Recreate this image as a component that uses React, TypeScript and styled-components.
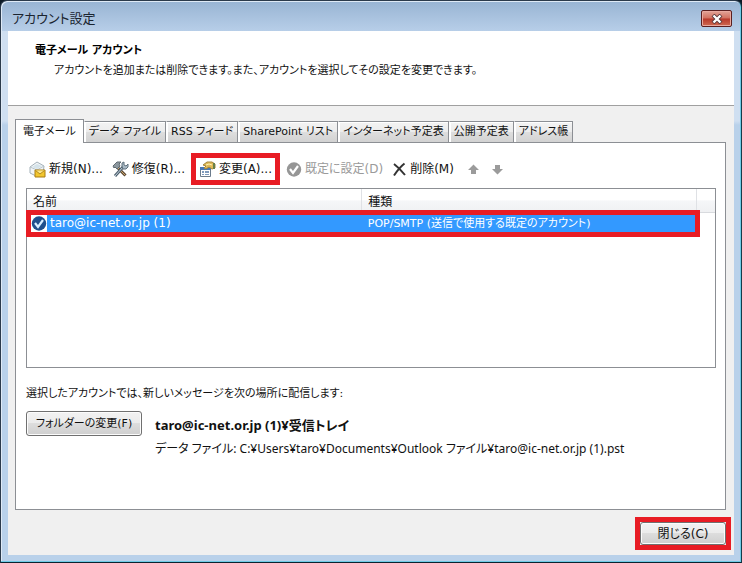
import React from "react";
import styled, { createGlobalStyle, css } from "styled-components";

const GlobalStyle = createGlobalStyle`
  * { box-sizing: border-box; }
  html, body { margin: 0; }
  body {
    background: #0c1a26;
    font-family: "DejaVu Sans", "Noto Sans CJK JP", sans-serif;
    font-size: 11px;
    line-height: 16px;
    font-feature-settings: "palt";
    color: #111;
  }
  button, table { font: inherit; font-feature-settings: inherit; color: inherit; }
  h1, h2, p { margin: 0; font-size: inherit; }
`;

const red = "#e81c24";

const Window = styled.main`
  display: flex;
  flex-direction: column;
  min-height: 100vh;
  padding: 0 7px 7px;
  border: 1px solid #2b3a4b;
  border-right-color: #123c4a;
  border-bottom-color: #0a2430;
  border-radius: 7px 7px 0 0;
  box-shadow: inset -1px -1px #6fcbe6, inset 1px 1px #dfeaf6;
  background:
    linear-gradient(#98b4d3, #b7cee8 30px, transparent 30px),
    linear-gradient(#cfdff1 120px, #b9d1ea 124px);
`;

const TitleBar = styled.header`
  display: flex;
  align-items: center;
  justify-content: space-between;
  height: 30px;
  padding: 5px 2px 0 4px;
`;

const Title = styled.h1`
  font-size: 13px;
  font-weight: 400;
  color: #1a2430;
`;

const CloseBox = styled.button`
  display: grid;
  place-items: center;
  width: 31px;
  height: 17px;
  padding: 0;
  border: 1px solid #5a1f20;
  border-radius: 2px;
  box-shadow: inset 0 0 0 1px #e9a99f;
  background: linear-gradient(#e2a498, #d2705f 48%, #b8382a 52%, #cf6a52);
`;

const Client = styled.div`
  flex: 1;
  display: flex;
  flex-direction: column;
  background: #f0f0f0;
`;

const Intro = styled.section`
  height: 75px;
  padding: 12px 27px;
  border-bottom: 1px solid #a0a0a0;
  background: #fff;
  h2 { font-weight: 700; color: #000; }
  p { padding: 4px 0 0 19px; }
`;

const Body = styled.div`
  flex: 1;
  display: flex;
  flex-direction: column;
  padding: 13px 8px 0 7px;
`;

const Tabs = styled.div`
  display: flex;
  align-items: flex-end;
`;

const Tab = styled.button<{ $active?: boolean }>`
  height: 21px;
  padding: 0 4px;
  border: 1px solid #8c8f94;
  border-left-color: #fff;
  border-bottom: 0;
  box-shadow: inset 1px 1px #fff;
  background: linear-gradient(#f3f3f3, #ececec 50%, #dedede 51%, #d2d2d2);
  white-space: nowrap;
  ${(p) =>
    p.$active &&
    css`
      position: relative;
      height: 24px;
      margin-bottom: -1px;
      padding: 0 7px;
      border-left-color: #8c8f94;
      background: #fff;
    `}
`;

const Panel = styled.section`
  flex: 1;
  display: flex;
  flex-direction: column;
  padding: 10px 9px 0 10px;
  border: 1px solid #8c8f94;
  background: #fff;
`;

const Toolbar = styled.div`
  display: flex;
  align-items: center;
  height: 32px;
  margin-bottom: 3px;
  font-size: 12px;
`;

const Tool = styled.button<{ $marked?: boolean }>`
  display: flex;
  align-items: center;
  gap: 3px;
  height: 32px;
  padding: 0 3px;
  border: 0;
  background: none;
  white-space: nowrap;
  svg { flex: none; }
  &:disabled { color: #9a9a9a; }
  ${(p) => p.$marked && css`border: 5px solid ${red};`}
`;

const AccountList = styled.div`
  flex: 1;
  min-height: 178px;
  border: 1px solid #8c8f94;
  background: linear-gradient(#fff, #fff 45%, #f5f6f8 50%, #f0f1f3 95%, #d8dade 96%) no-repeat
    0 0 / 100% 24px;
`;

const AccountTable = styled.table`
  width: calc(100% - 18px);
  table-layout: fixed;
  border-collapse: collapse;
  th {
    height: 26px;
    padding: 0 6px;
    border-right: 1px solid #dfe1e5;
    font-size: 12px;
    font-weight: 400;
    text-align: left;
  }
  td {
    height: 17px;
    padding: 0 6px;
    background: #3399ff;
    color: #fff;
    line-height: 17px;
    white-space: nowrap;
  }
  td:first-child { padding: 0 0 0 4px; }
`;

const MarkedRow = styled.tr`
  position: relative;
  td:last-child::after {
    content: "";
    position: absolute;
    inset: -5px -3px -5px -1px;
    border: 5px solid ${red};
    pointer-events: none;
  }
`;

const Account = styled.span`
  display: flex;
  align-items: center;
  gap: 3px;
  height: 17px;
  font-size: 12px;
  svg { flex: none; background: #fff; }
`;

const Delivery = styled.div`
  display: grid;
  grid-template-columns: auto 1fr;
  column-gap: 13px;
  padding: 18px 0 52px;
`;

const DeliveryLabel = styled.p`
  grid-column: 1 / -1;
  margin-bottom: 9px;
`;

const PushButton = styled.button`
  height: 25px;
  padding: 0 8px;
  border: 1px solid #707070;
  border-radius: 3px;
  box-shadow: inset 0 0 0 1px #fcfcfc;
  background: linear-gradient(#f2f2f2, #ebebeb 49%, #dddddd 50%, #cfcfcf);
  white-space: nowrap;
`;

const FolderButton = styled(PushButton)`
  min-width: 116px;
`;

const Target = styled.div`
  padding-top: 6px;
  font-family: "Noto Sans", "Noto Sans CJK JP", sans-serif;
  font-size: 12px;
  strong { display: block; margin-bottom: 8px; font-size: 13px; }
`;

const Footer = styled.footer`
  display: flex;
  justify-content: flex-end;
  padding: 7px 3px 5px;
  margin-right: -8px;
`;

const Mark = styled.div`
  display: flex;
  border: 5px solid ${red};
`;

const DoneButton = styled(PushButton)`
  min-width: 86px;
  height: 23px;
  font-size: 12px;
`;

const NewIcon = () => (
  <svg width="17" height="17" viewBox="0 0 17 17" aria-hidden="true">
    <path d="M1 6 8 1l7 4-1 8-7 2-6-3z" fill="#f2f5f7" stroke="#a3b0b9" />
    <path d="m1 6 7 3 7-4M8 9l-1 6" fill="none" stroke="#b9c5cc" />
    <path d="m3 6 5-3 5 2-5 3z" fill="#d5e3ea" />
    <path d="M6 9h10v7H6z" fill="#f2c62e" stroke="#a97d12" />
    <path d="m6.500 9.500 4.500 3.500 4.500-3.500" fill="#fbe58a" stroke="#b58a1c" />
  </svg>
);

const RepairIcon = () => (
  <svg width="17" height="17" viewBox="0 0 17 17" aria-hidden="true">
    <path d="m5 6 8.500 8.500" stroke="#5d4934" strokeWidth="3" />
    <path d="m5 6 8 8" stroke="#c9a66b" />
    <path d="m1 5 4-4h4L7 3l1 2-3 3-2-2-1 1z" fill="#8c979e" stroke="#5f6a71" />
    <path d="m3 15 8-9" stroke="#4d5f6d" strokeWidth="3" />
    <path d="m3 15 8-9" stroke="#c6d5df" />
    <path d="M10 5V2l2-1v3l2 1 2-2v3l-2 2h-3z" fill="#a9bac6" stroke="#61727e" />
  </svg>
);

const ChangeIcon = () => (
  <svg width="17" height="17" viewBox="0 0 17 17" aria-hidden="true">
    <path d="M1.500 6.500h10v9h-10z" fill="#fff" stroke="#6b7b8c" />
    <path d="M1 6h11v3H1z" fill="#4676b4" />
    <path d="M3 10h2v2H3zm3 0h4v2H6zM3 13h2v1H3zm3 0h4v1H6z" fill="#7f9bbd" />
    <path d="m4 4 4-3h5l3 2v4l-3 1-3-2-3 2-2-1 2-2z" fill="#dfba58" stroke="#a5853a" />
    <path d="m7 4 3-1 3 1" fill="none" stroke="#fff0b0" />
    <path d="M14 2h2v6h-2z" fill="#67804a" />
  </svg>
);

const CheckIcon = ({ fill, tick }: { fill: string; tick: string }) => (
  <svg width="16" height="17" viewBox="0 0 16 17" aria-hidden="true">
    <circle cx="8" cy="8.500" r="7.200" fill={fill} />
    <path d="m4 8 3 4 5-7" fill="none" stroke={tick} strokeWidth="2.200" />
  </svg>
);

const DeleteIcon = () => (
  <svg width="15" height="15" viewBox="0 0 15 15" aria-hidden="true">
    <path d="M2 2c4 3 7 6 11 11M12.500 1.500C8 5 5 9 2 13.500" fill="none" stroke="#333" strokeWidth="2" />
  </svg>
);

const ArrowIcon = ({ down }: { down?: boolean }) => (
  <svg width="11" height="11" viewBox="0 0 11 11" aria-hidden="true">
    <path
      d={down ? "M3 1h5v4h3L5.500 10.500 0 5h3z" : "M3 10h5V6h3L5.500.500 0 6h3z"}
      fill="#9b9b9b"
    />
  </svg>
);

const Cross = () => (
  <svg width="12" height="10" viewBox="0 0 12 10" aria-hidden="true">
    <path d="m2 1 8 8m0-8-8 8" stroke="#57373a" strokeWidth="4" />
    <path d="m2.500 1.500 7 7m0-7-7 7" stroke="#fff" strokeWidth="2.400" />
  </svg>
);

const tabs = [
  "電子メール",
  "データ ファイル",
  "RSS フィード",
  "SharePoint リスト",
  "インターネット予定表",
  "公開予定表",
  "アドレス帳",
];

const Moves = styled.div`
  display: flex;
  gap: 7px;
  padding-left: 8px;
`;

const Tools = styled.div`
  display: flex;
  gap: 3px;
`;

export default function App() {
  return (
    <>
      <GlobalStyle />
      <Window>
        <TitleBar>
          <Title>アカウント設定</Title>
          <CloseBox aria-label="閉じる">
            <Cross />
          </CloseBox>
        </TitleBar>
        <Client>
          <Intro>
            <h2>電子メール アカウント</h2>
            <p>アカウントを追加または削除できます。また、アカウントを選択してその設定を変更できます。</p>
          </Intro>
          <Body>
            <Tabs role="tablist">
              {tabs.map((name, i) => (
                <Tab key={name} role="tab" aria-selected={i === 0} $active={i === 0}>
                  {name}
                </Tab>
              ))}
            </Tabs>
            <Panel role="tabpanel">
              <Toolbar>
                <Tools>
                  <Tool><NewIcon />新規(N)...</Tool>
                  <Tool><RepairIcon />修復(R)...</Tool>
                  <Tool $marked><ChangeIcon />変更(A)...</Tool>
                  <Tool disabled><CheckIcon fill="#969696" tick="#fff" />既定に設定(D)</Tool>
                  <Tool><DeleteIcon />削除(M)</Tool>
                </Tools>
                <Moves>
                  <Tool disabled aria-label="上へ"><ArrowIcon /></Tool>
                  <Tool disabled aria-label="下へ"><ArrowIcon down /></Tool>
                </Moves>
              </Toolbar>
              <AccountList>
                <AccountTable>
                  <thead>
                    <tr>
                      <th scope="col">名前</th>
                      <th scope="col">種類</th>
                    </tr>
                  </thead>
                  <tbody>
                    <MarkedRow>
                      <td>
                        <Account>
                          <CheckIcon fill="#1f4e8c" tick="#d6ecff" />
                          taro@ic-net.or.jp (1)
                        </Account>
                      </td>
                      <td>POP/SMTP (送信で使用する既定のアカウント)</td>
                    </MarkedRow>
                  </tbody>
                </AccountTable>
              </AccountList>
              <Delivery>
                <DeliveryLabel>選択したアカウントでは、新しいメッセージを次の場所に配信します:</DeliveryLabel>
                <FolderButton>フォルダーの変更(F)</FolderButton>
                <Target>
                  <strong>taro@ic-net.or.jp (1)¥受信トレイ</strong>
                  <p>データ ファイル: C:¥Users¥taro¥Documents¥Outlook ファイル¥taro@ic-net.or.jp (1).pst</p>
                </Target>
              </Delivery>
            </Panel>
            <Footer>
              <Mark>
                <DoneButton>閉じる(C)</DoneButton>
              </Mark>
            </Footer>
          </Body>
        </Client>
      </Window>
    </>
  );
}
